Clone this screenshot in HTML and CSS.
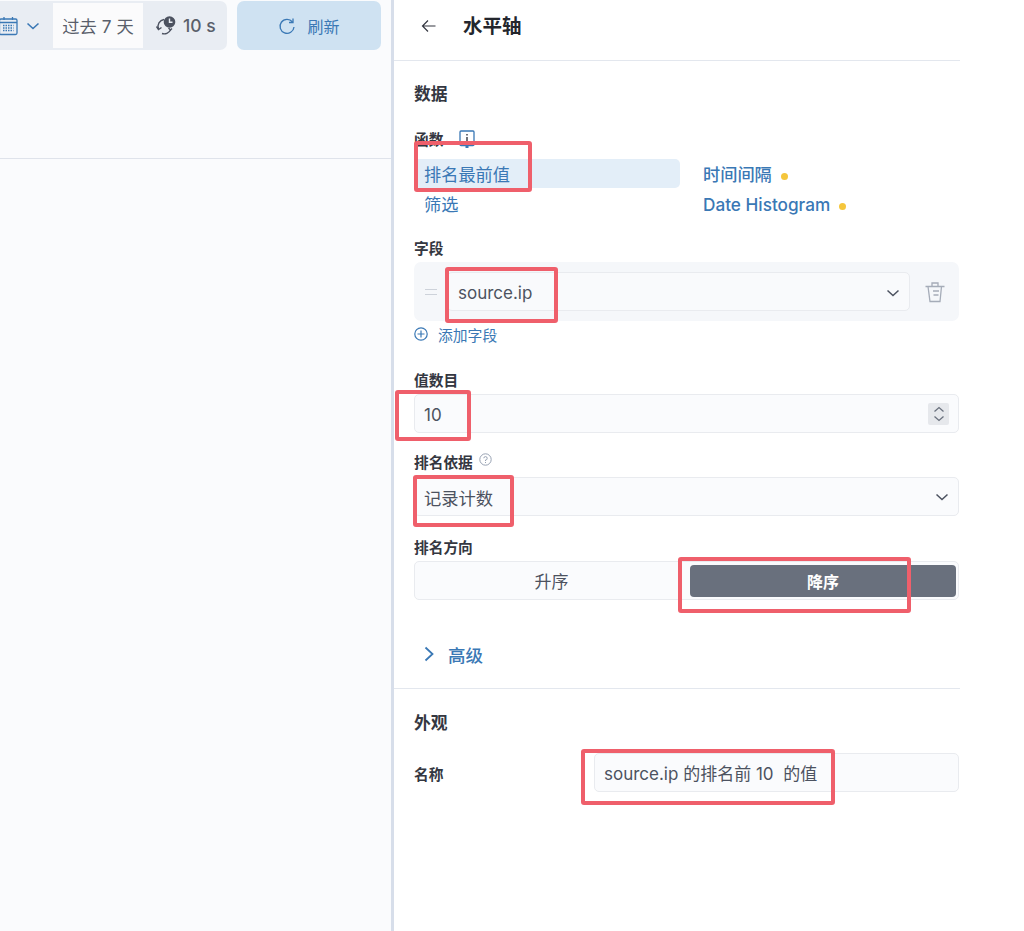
FILE: index.html
```html
<!DOCTYPE html>
<html lang="zh">
<head>
<meta charset="utf-8">
<title>水平轴</title>
<link rel="stylesheet" href="styles.css">
</head>
<body>
<div class="page">
  <main class="left">
    <div class="toolbar">
      <div class="picker">
        <svg class="cal" viewBox="0 0 20 20" width="20" height="20" fill="none" stroke="#3a78b5" stroke-width="1.300"><rect x="1.500" y="3" width="17.500" height="15.500" rx="1.500"/><path d="M1.500 6.500h17.500M6 1v3M14.500 1v3"/><path d="M5 9.500h10.500M5 12h10.500M5 14.500h10.500" stroke-width="1.300" stroke-dasharray="1.500 1"/></svg>
        <svg class="cal-chev" viewBox="0 0 14 14" width="14" height="14" fill="none" stroke="#3a78b5" stroke-width="1.600"><path d="M1.500 4.500l5.500 5 5.500-5"/></svg>
        <div class="range">过去 7 天</div>
        <div class="interval">
          <svg viewBox="0 0 22 22" width="22" height="22" fill="none" stroke="#4c5260" stroke-width="1.400"><path d="M9 4.500A7 7 0 0 0 3.500 14M7 18.500a7 7 0 0 0 8.500-3.500"/><path d="M1.500 11.500L3.500 14.500l3-2M17 13.500l-1.500 1.500-2-2"/><circle cx="14.500" cy="7" r="5.800" fill="#4c5260" stroke="none"/><path d="M14.500 3.500v3.800h3" stroke="#e9edf3"/></svg>
          <span>10 s</span>
        </div>
      </div>
      <button class="refresh">
        <svg viewBox="0 0 18 18" width="18" height="18" fill="none" stroke="#3a78b5" stroke-width="1.300"><path d="M14.500 5A7 7 0 1 0 16 10"/><path d="M15 1.500V5.500H11"/></svg>
        <span>刷新</span>
      </button>
    </div>
  </main>

  <aside class="panel">
    <header class="panel-head">
      <svg viewBox="0 0 16 16" width="16" height="16" fill="none" stroke="#343741" stroke-width="1.200"><path d="M14.500 8H1.500M7 2.500L1.500 8 7 13.500"/></svg>
      <h1>水平轴</h1>
    </header>

    <section class="section data">
      <h2 class="heading">数据</h2>

      <div class="label fn-label">
        <span>函数</span>
        <svg viewBox="0 0 16 18" width="16" height="18" fill="none" stroke="#3a78b5" stroke-width="1.300"><rect x="1" y="1" width="14" height="14.500" rx="1"/><path d="M8 4v1.500M8 7v6" stroke="#343741" stroke-width="1.400"/><rect x="6.500" y="15" width="3" height="3" fill="#3a78b5" stroke="none"/></svg>
      </div>
      <div class="fn-grid">
        <div class="fn fn-on">排名最前值</div>
        <div class="fn fn-alt">时间间隔<i class="dot"></i></div>
        <div class="fn">筛选</div>
        <div class="fn fn-alt">Date Histogram<i class="dot"></i></div>
      </div>

      <div class="label mt19">字段</div>
      <div class="field-group">
        <span class="grip"></span>
        <div class="control grow">
          <span>source.ip</span>
          <svg class="chev" viewBox="0 0 14 14" width="14" height="14" fill="none" stroke="#4c5260" stroke-width="1.500"><path d="M1.500 4.500l5.500 5 5.500-5"/></svg>
        </div>
        <svg class="trash" viewBox="0 0 22 22" width="22" height="22" fill="none" stroke="#a5acb8" stroke-width="1.300"><path d="M1.500 5.500h19M8 5.500V2h6v3.500M4 5.500l2 15h10l1.500-15M9 10h6M9.500 14h5"/></svg>
      </div>
      <div class="add">
        <svg viewBox="0 0 14 14" width="14" height="14" fill="none" stroke="#3a78b5" stroke-width="1.200"><circle cx="7" cy="7" r="6.200"/><path d="M7 3.500v7M3.500 7h7"/></svg>
        <span>添加字段</span>
      </div>

      <div class="label mt26">值数目</div>
      <div class="control number">
        <span class="num">10</span>
        <span class="stepper">
          <svg viewBox="0 0 12 18" width="12" height="18" fill="none" stroke="#69707d" stroke-width="1.300"><path d="M1.500 6.500L6 2.500l4.500 4M1.500 11.500l4.500 4 4.500-4"/></svg>
        </span>
      </div>

      <div class="label mt19 mb5">
        <span>排名依据</span>
        <svg class="help" viewBox="0 0 13 13" width="13" height="13" fill="none" stroke="#98a2b3" stroke-width="1"><circle cx="6.500" cy="6.500" r="5.700"/><path d="M4.800 5.200A1.700 1.700 0 1 1 6.500 7v1M6.500 9v1"/></svg>
      </div>
      <div class="control order">
        <span>记录计数</span>
        <svg class="chev" viewBox="0 0 14 14" width="14" height="14" fill="none" stroke="#4c5260" stroke-width="1.500"><path d="M1.500 4.500l5.500 5 5.500-5"/></svg>
      </div>

      <div class="label mt21">排名方向</div>
      <div class="toggle">
        <div class="opt">升序</div>
        <div class="opt opt-on">降序</div>
      </div>

      <div class="advanced">
        <svg viewBox="0 0 10 16" width="10" height="16" fill="none" stroke="#3a78b5" stroke-width="1.800"><path d="M1.500 1.500L8.500 8l-7 6.500"/></svg>
        <span>高级</span>
      </div>
    </section>

    <section class="section look">
      <h2 class="heading">外观</h2>
      <div class="name-row">
        <div class="name-label">名称</div>
        <div class="control grow name-input">source.ip 的排名前 10&nbsp; 的值</div>
      </div>
    </section>
  </aside>

  <div class="mark m1"></div>
  <div class="mark m2"></div>
  <div class="mark m3"></div>
  <div class="mark m4"></div>
  <div class="mark m5"></div>
  <div class="mark m6"></div>
</div>
</body>
</html>
```

FILE: styles.css
```css
* { box-sizing: border-box; }
html, body { margin: 0; height: 100%; background: #fff; }
body {
  font-family: Inter, "Noto Sans CJK SC", "Noto Sans", sans-serif;
  color: #343741;
  font-size: 16px;
}
.page { position: relative; display: flex; width: 960px; height: 931px; overflow: hidden; }

/* left pane */
.left {
  width: 391px;
  flex: none;
  background: #fafbfd;
}
.toolbar {
  height: 159px;
  border-bottom: 1px solid #dfe3eb;
  padding: 1px 10px 0 0;
  display: flex;
  gap: 10px;
  align-items: flex-start;
}
.picker {
  width: 227px;
  height: 49px;
  background: #e9edf3;
  border-radius: 0 7px 7px 0;
  display: flex;
  align-items: center;
}
.cal { margin-left: -2px; flex: none; }
.cal-chev { margin-left: 8px; flex: none; }
.range {
  margin-left: 13px;
  width: 90px;
  height: 45px;
  background: #fbfbfc;
  color: #5a5f6b;
  display: flex;
  align-items: center;
  justify-content: center;
  font-size: 17.300px;
}
.interval {
  display: flex;
  align-items: center;
  gap: 6px;
  margin-left: 12px;
  font-size: 17.500px;
  font-weight: 500;
  color: #5a5f6b;
  white-space: nowrap;
}
.refresh {
  width: 144px;
  height: 49px;
  border: 0;
  border-radius: 7px;
  background: #cfe2f2;
  color: #3a78b5;
  font: inherit;
  font-size: 16px;
  display: flex;
  align-items: center;
  justify-content: center;
  gap: 11px;
  padding: 0;
}

/* right panel */
.panel {
  width: 569px;
  flex: none;
  border-left: 3px solid #d7deea;
  background: #fff;
}
.panel-head {
  height: 61px;
  border-bottom: 1px solid #e3e7ee;
  padding: 0 0 8px 27px;
  display: flex;
  align-items: center;
  gap: 26px;
}
.panel-head h1 {
  margin: 0;
  font-size: 19.500px;
  line-height: 26px;
  font-weight: 700;
  color: #23262d;
}
.section { padding: 0 1px 0 20px; }
.data { padding-top: 23px; padding-bottom: 22px; border-bottom: 1px solid #e3e7ee; }
.look { padding-top: 24px; }
.heading {
  margin: 0;
  height: 20px;
  font-size: 16.800px;
  line-height: 20px;
  font-weight: 700;
  color: #343741;
}
.label {
  display: flex;
  align-items: center;
  gap: 6px;
  font-size: 14.700px;
  line-height: 18px;
  font-weight: 700;
  height: 20px;
  padding-top: 1px;
  color: #343741;
  margin-bottom: 4px;
}
.mt19 { margin-top: 19px; }
.mt26 { margin-top: 26px; }
.mt21 { margin-top: 21px; }
.mb5 { margin-bottom: 5px; }
.fn-label { margin-top: 25px; margin-bottom: 10px; gap: 16px; }
.fn-label svg { margin-top: -2px; }
.help { margin-top: -6px; }

.fn-grid {
  display: grid;
  grid-template-columns: 266px 1fr;
  grid-auto-rows: 30px;
}
.fn {
  color: #3a78b5;
  font-size: 17.200px;
  line-height: 29px;
  padding: 1px 0 0 10px;
  white-space: nowrap;
}
.fn-on { background: #e3eef8; height: 29px; border-radius: 5px; }
.fn-alt { padding-left: 23px; font-weight: 500; }
.dot {
  display: inline-block;
  width: 7px;
  height: 7px;
  border-radius: 50%;
  background: #f5c63c;
  margin-left: 9px;
  vertical-align: 1px;
}

.control {
  display: flex;
  align-items: center;
  justify-content: space-between;
  height: 39px;
  background: #fafbfd;
  border: 1px solid #e9ebef;
  border-radius: 5px;
  padding: 1px 9px 0;
  color: #4c5260;
  font-size: 17px;
}
.grow { flex: 1; min-width: 0; }
.name-input { padding-top: 0; }
.field-group {
  height: 59px;
  background: #f5f7fa;
  border-radius: 7px;
  padding: 0 14px 0 11px;
  display: flex;
  align-items: center;
  margin-bottom: 3px;
}
.grip {
  width: 12px;
  height: 6px;
  margin-right: 10px;
  border-top: 1px solid #cdd2da;
  border-bottom: 1px solid #cdd2da;
  flex: none;
}
.field-group .control { padding: 3px 9px 1px 10px; background: #f9fafc; width: 463px; flex: none; }
.trash { margin-left: 14px; flex: none; }
.add {
  height: 20px;
  display: flex;
  align-items: center;
  gap: 10px;
  color: #3a78b5;
  font-size: 14.800px;
}
.num { padding-top: 2px; }
.stepper {
  width: 21px;
  height: 22px;
  background: #e6e8ec;
  border-radius: 2px;
  display: flex;
  align-items: center;
  justify-content: center;
}
.order { font-size: 17.300px; }
.chev { flex: none; }
.toggle {
  height: 39px;
  border: 1px solid #e9ebef;
  border-radius: 5px;
  background: #fafbfd;
  display: flex;
  align-items: center;
  padding: 0 2px 0 0;
}
.opt {
  flex: 1;
  height: 32px;
  display: flex;
  align-items: center;
  justify-content: center;
  padding-right: 2px;
  font-size: 17px;
  color: #4c5260;
}
.opt-on {
  flex: none;
  width: 266px;
  padding-right: 0;
  background: #69707d;
  color: #fff;
  font-size: 16px;
  font-weight: 700;
  border-radius: 4px;
}
.advanced {
  margin-top: 42px;
  height: 24px;
  display: flex;
  align-items: center;
  gap: 14px;
  padding-left: 10px;
  color: #3a78b5;
  font-size: 17.500px;
  font-weight: 500;
}
.name-row { margin-top: 20px; display: flex; align-items: center; }
.name-label {
  width: 180px;
  flex: none;
  padding-top: 2px;
  font-size: 14.700px;
  font-weight: 700;
}

/* hand-drawn annotation frames lying over the screenshot */
.mark {
  position: absolute;
  border: 4px solid #ef5f6b;
  border-radius: 3px;
}
.m1 { left: 414px; top: 141px; width: 118px; height: 51px; }
.m2 { left: 445px; top: 267px; width: 113px; height: 56px; }
.m3 { left: 395px; top: 390px; width: 76px; height: 51px; }
.m4 { left: 413px; top: 475px; width: 101px; height: 52px; }
.m5 { left: 678px; top: 557px; width: 233px; height: 56px; }
.m6 { left: 581px; top: 749px; width: 254px; height: 56px; }
```
